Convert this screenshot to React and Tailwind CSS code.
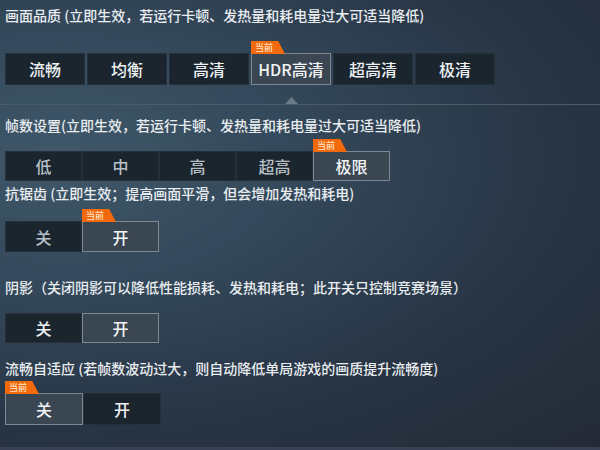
import React from 'react';

const Tag = () => (
  <div className="absolute left-[-1px] bottom-full h-[13px] w-[34px] bg-[#f26a0c] [clip-path:polygon(0_0,80%_0,100%_100%,0_100%)] text-[9px] leading-[13px] text-[#ffe3c8] pl-[4px]">
    当前
  </div>
);

const Options = ({ items, selected, tagged, width, gap, height, dim }) => (
  <div className={`flex ${gap} pl-[5px]`}>
    {items.map((item, i) => {
      const isSel = i === selected;
      return (
        <div
          key={item}
          className={`relative ${width} ${height} flex items-center justify-center text-[16px] font-medium border ${
            isSel
              ? 'bg-[#3a4651] border-[#7d8893] text-[#f2f4f6]'
              : `bg-[#1b252e] border-[#25313a] ${dim ? 'text-[#b8c0c7]' : 'text-[#eef1f3]'}`
          }`}
        >
          {item}
          {isSel && tagged && <Tag />}
        </div>
      );
    })}
  </div>
);

const Title = ({ children, className }) => (
  <div className={`h-5 leading-5 text-[14px] font-medium text-[#e9edf0] pl-[5px] whitespace-nowrap ${className}`}>{children}</div>
);

export default function App() {
  return (
    <div className="w-[600px] h-[450px] overflow-hidden relative font-['Noto_Sans_CJK_SC','Noto_Sans',sans-serif] bg-[radial-gradient(ellipse_at_10%_35%,#3f5869_0%,#34495b_30%,#283545_65%,#232a35_100%)]">
      <div className="pt-[5px]">
        <Title>画面品质 (立即生效，若运行卡顿、发热量和耗电量过大可适当降低)</Title>
        <div className="mt-[28px]">
          <Options
            items={['流畅', '均衡', '高清', 'HDR高清', '超高清', '极清']}
            selected={3}
            tagged
            width="w-[80px]"
            gap="gap-[2px]"
            height="h-[32px]"
          />
        </div>
        <div className="mt-[12px] h-[7px] pl-[285px]">
          <div className="w-[13px] h-[7px] bg-[#687a87] [clip-path:polygon(50%_0,100%_100%,0_100%)]"></div>
        </div>
        <div className="h-px bg-[#4c5d6a]"></div>

        <Title className="mt-[10px]">帧数设置(立即生效，若运行卡顿、发热量和耗电量过大可适当降低)</Title>
        <div className="mt-[16px]">
          <Options
            items={['低', '中', '高', '超高', '极限']}
            selected={4}
            tagged
            width="w-[77px]"
            gap="gap-0"
            height="h-[30px]"
            dim
          />
        </div>

        <Title className="mt-[2px]">抗锯齿 (立即生效；提高画面平滑，但会增加发热和耗电)</Title>
        <div className="mt-[18px]">
          <Options items={['关', '开']} selected={1} tagged width="w-[77px]" gap="gap-0" height="h-[31px]" dim />
        </div>

        <Title className="mt-[25px]">阴影（关闭阴影可以降低性能损耗、发热和耗电；此开关只控制竞赛场景）</Title>
        <div className="mt-[16px]">
          <Options items={['关', '开']} selected={1} width="w-[77px]" gap="gap-0" height="h-[30px]" />
        </div>

        <Title className="mt-[15px]">流畅自适应 (若帧数波动过大，则自动降低单局游戏的画质提升流畅度)</Title>
        <div className="mt-[15px]">
          <Options items={['关', '开']} selected={0} tagged width="w-[78px]" gap="gap-0" height="h-[32px]" />
        </div>
      </div>
      <div className="absolute left-0 right-0 bottom-0 h-[3px] bg-[#3a4156]"></div>
    </div>
  );
}
